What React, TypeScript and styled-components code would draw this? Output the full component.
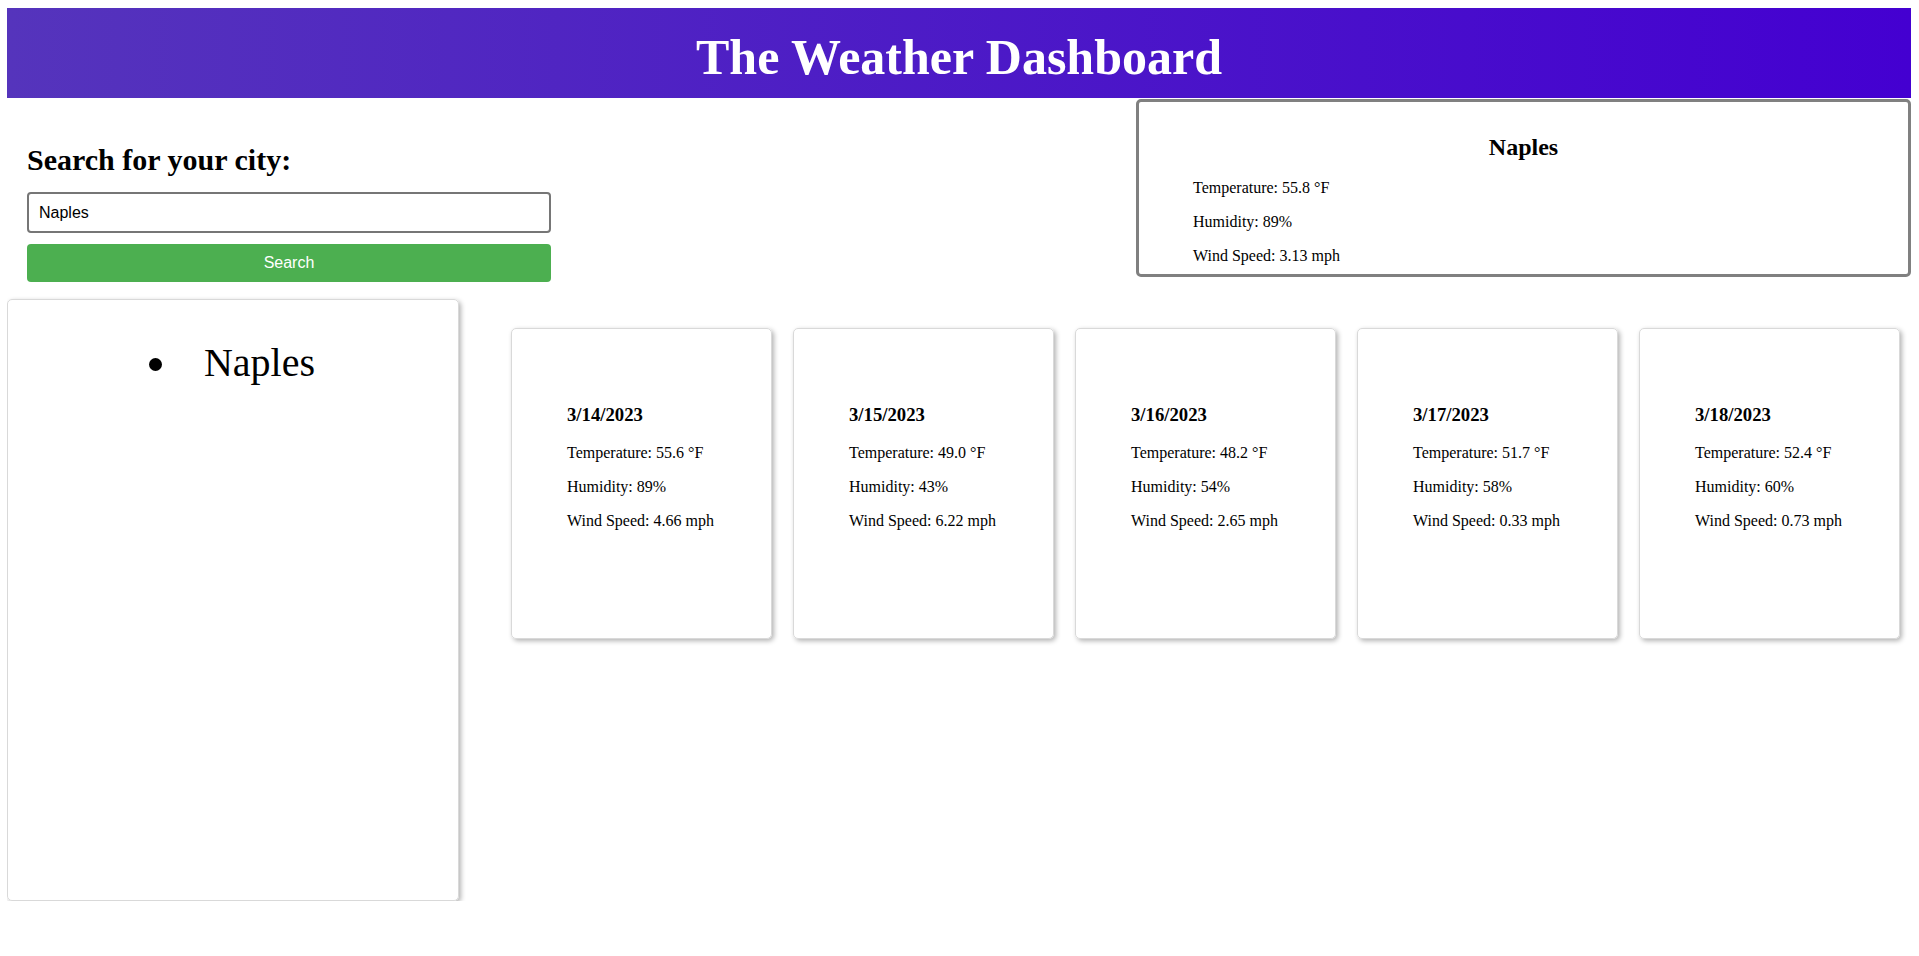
import React from "react";
import styled, { createGlobalStyle } from "styled-components";

const GlobalStyle = createGlobalStyle`
  html, body { background: #ffffff; }
  body {
    margin: 8px 8px 0 7px;
    font-family: "Liberation Serif", "Times New Roman", serif;
    color: #000;
  }
  * { box-sizing: border-box; }
`;

const Header = styled.header`
  height: 90px;
  padding-top: 21px;
  background: linear-gradient(90deg, #5534bc 0%, #4400d1 100%);
  display: flex;
  justify-content: center;
  align-items: flex-start;
`;

const Title = styled.h1`
  margin: 0;
  font-size: 50px;
  line-height: 57px;
  font-weight: 700;
  color: #ffffff;
`;

const TopRow = styled.div`
  display: flex;
  justify-content: space-between;
  align-items: flex-start;
`;

const SearchPanel = styled.section`
  padding: 45px 0 0 20px;
  width: 544px;
`;

const SearchHeading = styled.h2`
  margin: 0 0 15px;
  font-size: 30px;
  line-height: 34px;
  font-weight: 700;
`;

const CityInput = styled.input`
  display: block;
  width: 524px;
  height: 41px;
  margin: 0 0 11px;
  padding: 0 10px;
  border: 2px solid #767676;
  border-radius: 4px;
  font-family: "Liberation Sans", Arial, sans-serif;
  font-size: 16px;
  color: #000;
  outline: none;
`;

const SearchButton = styled.button`
  display: block;
  width: 524px;
  height: 38px;
  border: none;
  border-radius: 4px;
  background: #4caf50;
  color: #ffffff;
  font-family: "Liberation Sans", Arial, sans-serif;
  font-size: 16px;
  cursor: pointer;
`;

const CurrentBox = styled.section`
  width: 775px;
  height: 178px;
  margin-top: 1px;
  padding: 12px 54px 0;
  border: 3px solid #808080;
  border-radius: 5px;
  overflow: hidden;
`;

const CityName = styled.h2`
  margin: 20px 0 17px;
  text-align: center;
  font-size: 24px;
  line-height: 27.6px;
  font-weight: 700;
`;

const Stat = styled.p`
  margin: 16px 0;
  font-size: 16px;
  line-height: 18px;
`;

const MainRow = styled.div`
  display: flex;
  align-items: flex-start;
  margin-top: 17px;
`;

const Sidebar = styled.aside`
  width: 452px;
  height: 602px;
  flex: none;
  border: 1px solid #d9d9d9;
  border-radius: 5px;
  box-shadow: 2px 2px 5px rgba(0, 0, 0, 0.3);
`;

const HistoryList = styled.ul`
  list-style: none;
  margin: 40px 0;
  padding: 0 2px 0 0;
  font-size: 40px;
`;

const HistoryItem = styled.li`
  display: flex;
  justify-content: center;
  align-items: center;
  gap: 42px;
  line-height: 46px;

  &::before {
    content: "";
    display: block;
    width: 13px;
    height: 13px;
    border-radius: 50%;
    background: #000;
    margin-top: 2px;
  }
`;

const Forecast = styled.section`
  flex: 1;
  display: flex;
  gap: 21px;
  padding: 29px 10px 0 52px;
`;

const Card = styled.article`
  width: 261px;
  height: 311px;
  flex: none;
  padding: 56px 20px 0 55px;
  border: 1px solid #d9d9d9;
  border-radius: 5px;
  box-shadow: 2px 2px 5px rgba(0, 0, 0, 0.3);
`;

const CardDate = styled.h3`
  margin: 18.72px 0;
  font-size: 18.72px;
  line-height: 21.5px;
  font-weight: 700;
`;

type Day = { date: string; temp: string; humidity: string; wind: string };

const days: Day[] = [
  { date: "3/14/2023", temp: "55.6", humidity: "89", wind: "4.66" },
  { date: "3/15/2023", temp: "49.0", humidity: "43", wind: "6.22" },
  { date: "3/16/2023", temp: "48.2", humidity: "54", wind: "2.65" },
  { date: "3/17/2023", temp: "51.7", humidity: "58", wind: "0.33" },
  { date: "3/18/2023", temp: "52.4", humidity: "60", wind: "0.73" },
];

export default function App() {
  return (
    <>
      <GlobalStyle />
      <Header>
        <Title>The Weather Dashboard</Title>
      </Header>
      <TopRow>
        <SearchPanel>
          <SearchHeading>Search for your city:</SearchHeading>
          <CityInput type="text" defaultValue="Naples" />
          <SearchButton type="button">Search</SearchButton>
        </SearchPanel>
        <CurrentBox>
          <CityName>Naples</CityName>
          <Stat>Temperature: 55.8 °F</Stat>
          <Stat>Humidity: 89%</Stat>
          <Stat>Wind Speed: 3.13 mph</Stat>
        </CurrentBox>
      </TopRow>
      <MainRow>
        <Sidebar>
          <HistoryList>
            <HistoryItem>Naples</HistoryItem>
          </HistoryList>
        </Sidebar>
        <Forecast>
          {days.map((d) => (
            <Card key={d.date}>
              <CardDate>{d.date}</CardDate>
              <Stat>Temperature: {d.temp} °F</Stat>
              <Stat>Humidity: {d.humidity}%</Stat>
              <Stat>Wind Speed: {d.wind} mph</Stat>
            </Card>
          ))}
        </Forecast>
      </MainRow>
    </>
  );
}
